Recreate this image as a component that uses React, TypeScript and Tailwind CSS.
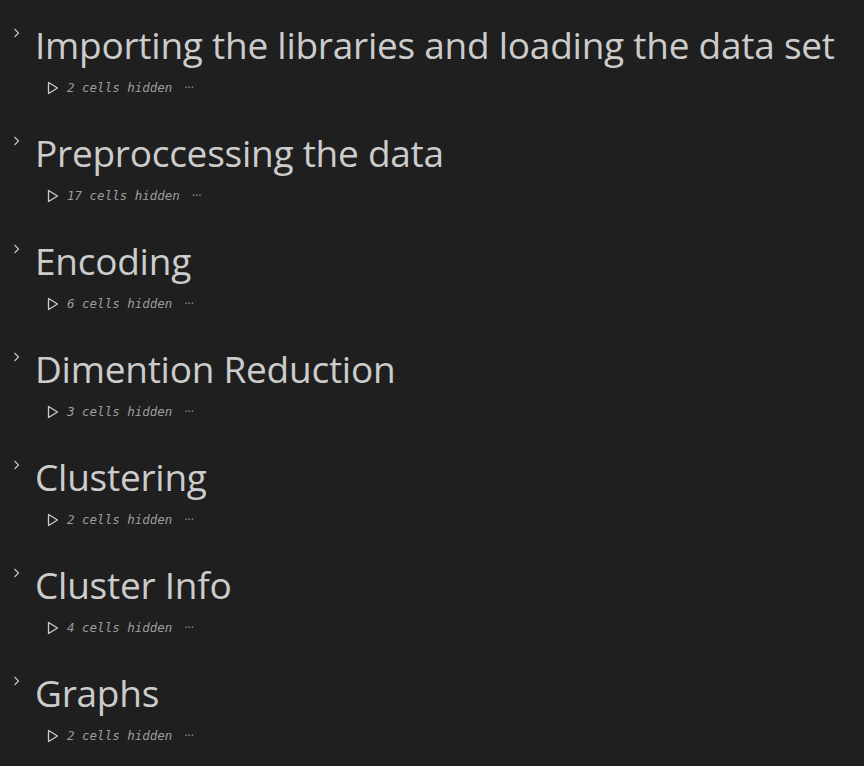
import React from 'react'

const sections = [
  { title: 'Importing the libraries and loading the data set', count: 2 },
  { title: 'Preproccessing the data', count: 17 },
  { title: 'Encoding', count: 6 },
  { title: 'Dimention Reduction', count: 3 },
  { title: 'Clustering', count: 2 },
  { title: 'Cluster Info', count: 4 },
  { title: 'Graphs', count: 2 },
]

const Chevron = () => (
  <svg width="8" height="10" viewBox="0 0 8 10" fill="none" className="mt-[12px]">
    <path d="M1.5 1 L5.5 5 L1.5 9" stroke="#c5c5c5" strokeWidth="1.2" />
  </svg>
)

const Play = () => (
  <svg width="12" height="14" viewBox="0 0 12 14" fill="none">
    <path d="M1.5 1.5 L10.5 7 L1.5 12.5 Z" stroke="#cccccc" strokeWidth="1.3" strokeLinejoin="round" />
  </svg>
)

const Section: React.FC<{ title: string; count: number }> = ({ title, count }) => (
  <div className="h-[108px] pt-[16px]">
    <div className="flex items-start">
      <div className="w-[35px] pl-[13px] shrink-0">
        <Chevron />
      </div>
      <h1
        className="text-[37px] tracking-[-0.25px] leading-[58px] text-[#cccccc] whitespace-nowrap"
        style={{ fontFamily: "'Open Sans', sans-serif" }}
      >
        {title}
      </h1>
    </div>
    <div className="flex items-center pl-[47px] mt-[5px] h-[18px]">
      <Play />
      <span
        className="ml-[8px] text-[12.5px] italic text-[#9d9d9d]"
        style={{ fontFamily: "'DejaVu Sans Mono', monospace" }}
      >
        {count} cells hidden
      </span>
      <span className="ml-[12px] text-[12px] text-[#8a8a8a] leading-none">···</span>
    </div>
  </div>
)

export default function App() {
  return (
    <div className="w-[864px] h-[766px] bg-[#1f1f1f] overflow-hidden">
      {sections.map((s) => (
        <Section key={s.title} title={s.title} count={s.count} />
      ))}
    </div>
  )
}
